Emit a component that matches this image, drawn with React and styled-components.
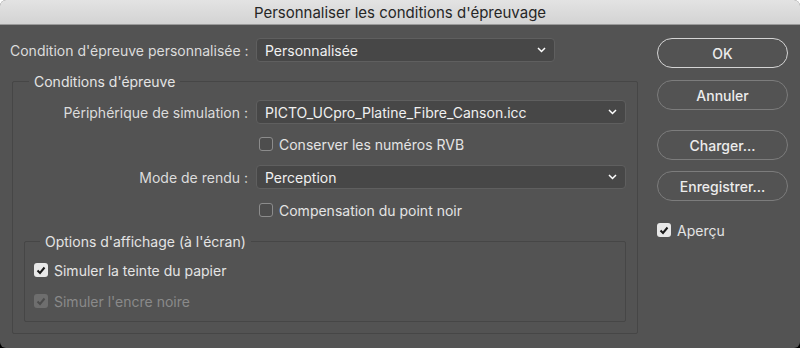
import styled, { createGlobalStyle } from "styled-components";

const GlobalStyle = createGlobalStyle`
  html, body {
    margin: 0;
    padding: 0;
  }
  body {
    background: linear-gradient(#ffffff 50%, #000000 50%);
    font-family: Inter, "Liberation Sans", Arial, sans-serif;
    font-size: 14px;
  }
`;

const Window = styled.div`
  width: 800px;
  height: 348px;
  background: #535353;
  border-radius: 6px;
  overflow: hidden;
  display: flex;
  flex-direction: column;
`;

const TitleBar = styled.div`
  height: 25px;
  box-sizing: border-box;
  border-bottom: 1px solid #9a9a9a;
  background: linear-gradient(#e3e3e3, #d3d3d3);
  display: flex;
  align-items: center;
  justify-content: center;
  color: #262626;
  font-size: 15px;
`;

const Body = styled.div`
  display: flex;
  flex: 1;
`;

const Main = styled.div`
  width: 628px;
  padding: 13px 0 0 10px;
`;

const Side = styled.div`
  display: flex;
  flex-direction: column;
  margin-left: 19px;
  padding-top: 13px;
  width: 131px;
`;

const Row = styled.div`
  display: flex;
  align-items: center;
  gap: 8px;
  height: 24px;
  margin-top: ${(p) => p.$mt || 0}px;
`;

const Label = styled.span`
  width: ${(p) => p.$w}px;
  text-align: right;
  color: #dcdcdc;
  white-space: nowrap;
`;

const Select = styled.div`
  width: ${(p) => p.$w}px;
  height: 24px;
  box-sizing: border-box;
  display: flex;
  align-items: center;
  justify-content: space-between;
  padding: 0 8px 0 8px;
  background: #474747;
  border: 1px solid #5f5f5f;
  border-radius: 4px;
  color: #f0f0f0;
`;

const Group = styled.fieldset`
  margin: ${(p) => p.$mt}px 0 0 ${(p) => p.$ml}px;
  padding: 0 ${(p) => p.$pr}px ${(p) => p.$pb}px ${(p) => p.$pl}px;
  border: 1px solid #464646;
  border-radius: 2px;
  min-width: 0;
`;

const Legend = styled.legend`
  margin-left: ${(p) => p.$ml}px;
  padding: 0 5px;
  line-height: 17px;
  color: #e4e4e4;
`;

const CheckRow = styled.label`
  display: flex;
  align-items: center;
  gap: 6px;
  height: 18px;
  margin-top: ${(p) => p.$mt || 0}px;
  margin-left: ${(p) => p.$ml || 0}px;
  color: ${(p) => (p.$disabled ? "#8a8a8a" : "#e4e4e4")};
`;

const Box = styled.span`
  width: 14px;
  height: 14px;
  box-sizing: border-box;
  border-radius: 3px;
  display: flex;
  align-items: center;
  justify-content: center;
  border: 1px solid ${(p) => (p.$checked ? "transparent" : "#8c8c8c")};
  background: ${(p) =>
    p.$checked ? (p.$disabled ? "#6e6e6e" : "#e8e8e8") : "#4d4d4d"};
`;

const Button = styled.button`
  height: 30px;
  width: 131px;
  margin-top: ${(p) => p.$mt || 0}px;
  border-radius: 15px;
  background: #535353;
  border: ${(p) => (p.$primary ? "1.5px solid #d4d4d4" : "1px solid #7c7c7c")};
  color: #ececec;
  font-family: inherit;
  font-size: 14px;
  font-weight: 500;
  padding: 0;
`;

function Chevron() {
  return (
    <svg width="9" height="6" viewBox="0 0 9 6">
      <path d="M1 1 L4.5 4.5 L8 1" fill="none" stroke="#ffffff" strokeWidth="1.5" />
    </svg>
  );
}

function Check({ checked, disabled, children, ...rest }) {
  return (
    <CheckRow $disabled={disabled} {...rest}>
      <Box $checked={checked} $disabled={disabled}>
        {checked && (
          <svg width="10" height="9" viewBox="0 0 10 9">
            <path
              d="M1.5 4.5 L4 7 L8.5 1.5"
              fill="none"
              stroke={disabled ? "#4c4c4c" : "#1a1a1a"}
              strokeWidth="2"
            />
          </svg>
        )}
      </Box>
      {children}
    </CheckRow>
  );
}

export default function App() {
  return (
    <>
      <GlobalStyle />
      <Window>
        <TitleBar>Personnaliser les conditions d'épreuvage</TitleBar>
        <Body>
          <Main>
            <Row>
              <Label $w={238}>Condition d'épreuve personnalisée :</Label>
              <Select $w={299}>
                Personnalisée
                <Chevron />
              </Select>
            </Row>
            <Group $mt={11} $ml={2} $pl={11} $pr={11} $pb={11}>
              <Legend $ml={5}>Conditions d'épreuve</Legend>
              <Row $mt={10}>
                <Label $w={224}>Périphérique de simulation :</Label>
                <Select $w={370}>
                  PICTO_UCpro_Platine_Fibre_Canson.icc
                  <Chevron />
                </Select>
              </Row>
              <Check $mt={11} $ml={235}>
                Conserver les numéros RVB
              </Check>
              <Row $mt={12}>
                <Label $w={224}>Mode de rendu :</Label>
                <Select $w={370}>
                  Perception
                  <Chevron />
                </Select>
              </Row>
              <Check $mt={12} $ml={235}>
                Compensation du point noir
              </Check>
              <Group $mt={14} $ml={0} $pl={9} $pr={9} $pb={11}>
                <Legend $ml={6}>Options d'affichage (à l'écran)</Legend>
                <Check checked $mt={11}>
                  Simuler la teinte du papier
                </Check>
                <Check checked disabled $mt={13}>
                  Simuler l'encre noire
                </Check>
              </Group>
            </Group>
          </Main>
          <Side>
            <Button $primary>OK</Button>
            <Button $mt={12}>Annuler</Button>
            <Button $mt={20}>Charger...</Button>
            <Button $mt={11}>Enregistrer...</Button>
            <Check checked $mt={20}>
              Aperçu
            </Check>
          </Side>
        </Body>
      </Window>
    </>
  );
}
